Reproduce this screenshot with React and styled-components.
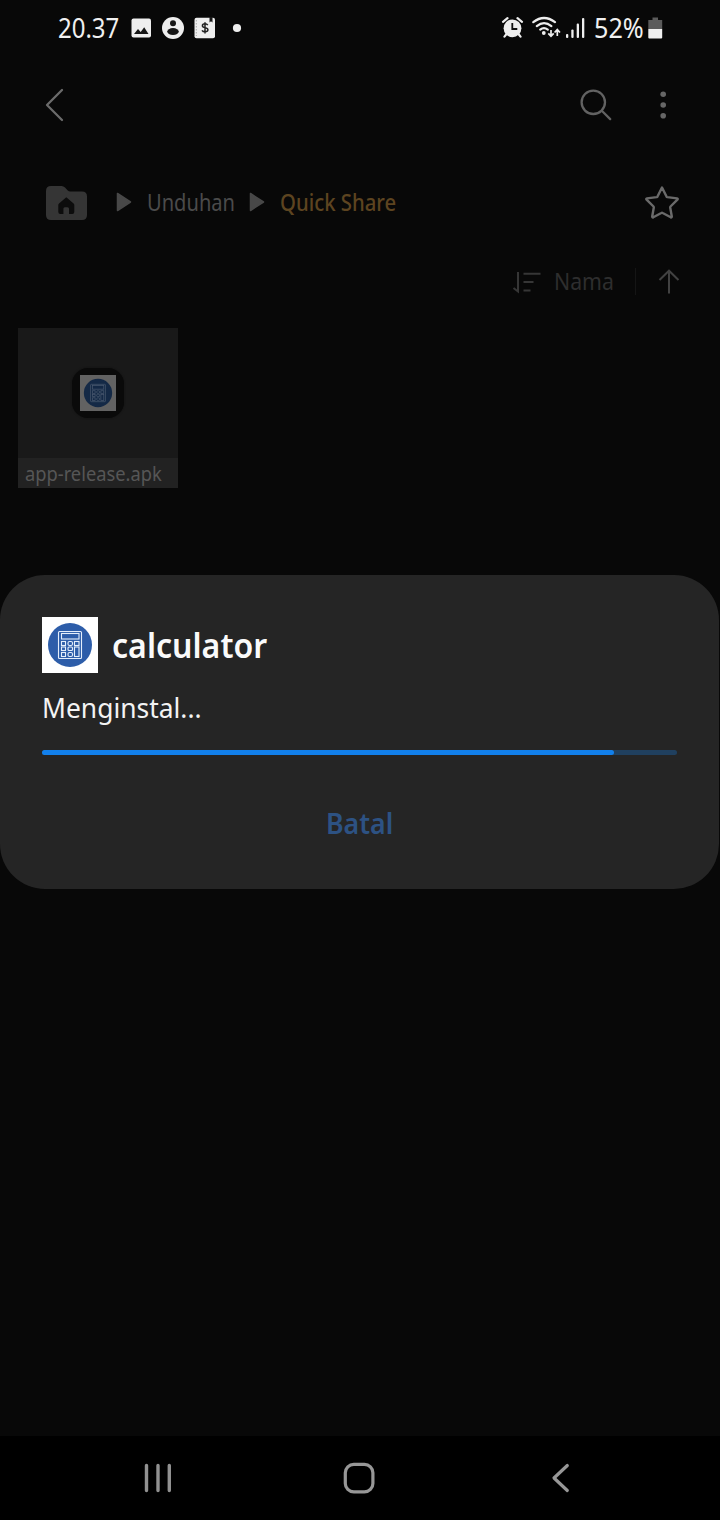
import React from "react";
import styled, { createGlobalStyle } from "styled-components";

const GlobalStyle = createGlobalStyle`
  * { box-sizing: border-box; }
  body { margin: 0; background: #080808; overflow: hidden; }
  svg { display: block; flex: none; }
`;

const Screen = styled.div`
  position: relative;
  display: flex;
  flex-direction: column;
  width: 720px;
  height: 1520px;
  background: #080808;
  font-family: "Noto Sans", sans-serif;
`;

/* Condensed label: the box keeps the final width, the glyphs are squeezed into it. */
const LabelBox = styled.div`
  flex: none;
  width: ${(p) => p.$width}px;
  height: ${(p) => p.$line}px;
  line-height: ${(p) => p.$line}px;
  font-size: ${(p) => p.$size}px;
  font-weight: ${(p) => p.$weight};
  color: ${(p) => p.$color};
  white-space: nowrap;
`;
const Squeeze = styled.span`
  display: inline-block;
  transform: scaleX(${(p) => p.$scale});
  transform-origin: 0 50%;
`;
function Label({ width, line = 30, size, weight = 400, color, scale = 1, children }) {
  return (
    <LabelBox $width={width} $line={line} $size={size} $weight={weight} $color={color}>
      <Squeeze $scale={scale}>{children}</Squeeze>
    </LabelBox>
  );
}

const StatusBar = styled.header`
  display: flex;
  justify-content: space-between;
  height: 56px;
  padding: 0 57px 0 58px;
`;
const StatusGroup = styled.div`
  display: flex;
  align-items: center;
`;
const BatteryLevel = styled.div`
  padding-left: 5px;
`;

const Toolbar = styled.div`
  display: flex;
  align-items: center;
  justify-content: space-between;
  height: 98px;
  padding: 0 52px 0 42px;
`;
const ToolbarActions = styled.div`
  display: flex;
  align-items: center;
  gap: 45px;
`;

const Breadcrumbs = styled.nav`
  display: flex;
  align-items: center;
  height: 96px;
  padding: 0 40px 0 45px;
`;
const Crumbs = styled.div`
  display: flex;
  align-items: center;
  flex: 1;
  padding-bottom: 1px;
`;
const CrumbArrow = styled.div`
  padding: 1px ${(p) => p.$after}px 0 ${(p) => p.$before}px;
`;

const SortBar = styled.div`
  display: flex;
  align-items: center;
  justify-content: flex-end;
  height: 63px;
  padding-right: 40px;
`;
const SortLabel = styled.div`
  padding: 0 20px 1px 12px;
`;
const Divider = styled.div`
  width: 1px;
  height: 27px;
  margin-right: 22px;
  background: #151515;
`;

const FileGrid = styled.main`
  flex: 1;
  padding: 15px 18px;
`;
const FileCard = styled.div`
  display: flex;
  flex-direction: column;
  width: 160px;
  height: 160px;
  background: #191919;
`;
const FilePreview = styled.div`
  display: flex;
  align-items: center;
  justify-content: center;
  flex: 1;
`;
const FileIcon = styled.div`
  display: flex;
  align-items: center;
  justify-content: center;
  width: 52px;
  height: 50px;
  border-radius: 16px;
  background: #0a0a0a;
  box-shadow: 0 0 2px #101010;
`;
const FileName = styled.div`
  height: 30px;
  padding-left: 7px;
  background: #222222;
`;

const Dialog = styled.section`
  position: absolute;
  top: 575px;
  left: 0;
  display: flex;
  flex-direction: column;
  width: 719px;
  height: 314px;
  padding: 42px 42px 0;
  border-radius: 45px;
  background: #252525;
`;
const DialogHeader = styled.div`
  display: flex;
  align-items: center;
  gap: 14px;
  height: 56px;
  margin-bottom: 17px;
`;
const Track = styled.div`
  height: 5px;
  margin-top: 26px;
  border-radius: 3px;
  background: #20405f;
`;
const Fill = styled.div`
  width: ${(p) => p.$value}%;
  height: 100%;
  border-radius: 3px;
  background: #1280ec;
`;
const DialogAction = styled.div`
  display: flex;
  justify-content: center;
  margin-top: 50px;
`;

const NavBar = styled.footer`
  display: flex;
  align-items: center;
  justify-content: space-between;
  height: 84px;
  padding: 0 148px 0 142px;
  background: #000;
`;

function CalculatorLogo({ size, dim }) {
  const paper = dim ? "#626262" : "#ffffff";
  const disc = dim ? "#142946" : "#2d5da9";
  const line = dim ? "#4b5a70" : "#e4eefb";
  return (
    <svg width={size} height={size} viewBox="0 0 56 56">
      <rect width="56" height="56" fill={paper} />
      <circle cx="28" cy="28" r="22" fill={disc} />
      <g fill="none" stroke={line} strokeWidth="1.1">
        <rect x="16.5" y="14.5" width="23" height="27" rx="1" />
        <rect x="19.5" y="16.5" width="17.5" height="5.5" />
        <rect x="19.5" y="24.5" width="4" height="4" />
        <rect x="26" y="24.5" width="4.5" height="4" rx="1.5" />
        <rect x="32.5" y="24.5" width="4.5" height="4" />
        <rect x="19.5" y="30" width="4" height="3.5" />
        <rect x="26" y="30" width="4.5" height="3.5" rx="1" />
        <rect x="19.5" y="35.5" width="4" height="4" />
        <rect x="26" y="35.5" width="4.5" height="4" rx="1.5" />
        <rect x="32.5" y="30" width="4.5" height="9.5" />
      </g>
    </svg>
  );
}

function NotificationIcons() {
  return (
    <svg width="120" height="24" viewBox="130 16 120 24">
      <g fill="#eeeeee">
        <rect x="131.5" y="18.5" width="19.5" height="19" rx="2" />
        <circle cx="173" cy="28" r="11" />
        <rect x="194.5" y="17.7" width="20.5" height="20.5" rx="2" />
        <circle cx="237" cy="28" r="4.1" />
      </g>
      <g fill="#161616">
        <path d="M134 34 L138 29 L140.7 32 L144.2 27.2 L148.5 34 Z" />
        <circle cx="173" cy="23.3" r="3" />
        <ellipse cx="173" cy="31.6" rx="5.8" ry="3.5" />
        <path d="M209.5 17h3v5.5l-1.5-1.2-1.5 1.2z" />
      </g>
      <path d="M196.3 20v16" stroke="#aaa" strokeWidth="1" strokeDasharray="1.5 1.5" />
      <path
        d="M207.8 25.1c-.7-1-1.7-1.3-2.8-1.3-1.5 0-2.6.7-2.6 1.9 0 2.8 5.5 1.3 5.5 4.1 0 1.3-1.2 2-2.8 2-1.4 0-2.5-.5-3.1-1.5M205 22.2v11.2"
        fill="none"
        stroke="#222"
        strokeWidth="1.5"
      />
    </svg>
  );
}

function SystemIcons() {
  return (
    <svg width="90" height="26" viewBox="499 15 90 26">
      <circle cx="512.5" cy="28.3" r="8.9" fill="#eee" />
      <g fill="none" stroke="#eee" strokeWidth="2.2" strokeLinecap="round">
        <path d="M503 21.8l4.5-3.6M522 21.8l-4.5-3.6M506.5 34l-2 2.6M518.5 34l2 2.6" />
      </g>
      <path d="M512.3 23v6h5" fill="none" stroke="#111" strokeWidth="1.8" />
      <g fill="none" stroke="#eee" strokeWidth="2.2" strokeLinecap="round">
        <path d="M533.3 22.2q10.7-8.4 21.7 0" />
        <path d="M536.8 26.1q7.2-5.8 14.6 0" />
        <path d="M540.2 29.6q3.7-2.9 7.6 0" />
      </g>
      <circle cx="543.8" cy="33" r="1.9" fill="#eee" />
      <g fill="none" stroke="#eee" strokeWidth="1.7">
        <path d="M551 30v6M548.3 33.3l2.7 2.9 2.7-2.9M557.3 36v-6M554.6 32.5l2.7-2.9 2.7 2.9" />
      </g>
      <g fill="#eee">
        <rect x="566" y="34" width="2.3" height="4" rx="1" />
        <rect x="571.3" y="29.5" width="2.3" height="8.5" rx="1" />
        <rect x="576.7" y="23.5" width="2.3" height="14.5" rx="1" />
        <rect x="582" y="18" width="2.3" height="20" rx="1" />
      </g>
    </svg>
  );
}

function BatteryIcon() {
  return (
    <svg width="15" height="23" viewBox="0 0 15 23">
      <path d="M4.5 0.5h5.500v2.500h4.200v9H0.300V3H4.500z" fill="#5b5b5b" />
      <path d="M0.300 12h13.900v8.500a1 1 0 0 1-1 1H1.300a1 1 0 0 1-1-1z" fill="#efefef" />
    </svg>
  );
}

function PlayTriangle() {
  return (
    <svg width="16" height="20" viewBox="0 0 16 20">
      <path d="M1.5 1.5v17L14.500 10z" fill="#484848" stroke="#484848" strokeWidth="1.5" strokeLinejoin="round" />
    </svg>
  );
}

export default function App() {
  return (
    <Screen>
      <GlobalStyle />
      <StatusBar>
        <StatusGroup>
          <Label width={72} size={26.5} color="#f0f0f0" scale={0.905}>20.37</Label>
          <NotificationIcons />
        </StatusGroup>
        <StatusGroup>
          <SystemIcons />
          <BatteryLevel>
            <Label width={54} size={26.5} color="#f0f0f0" scale={0.95}>52%</Label>
          </BatteryLevel>
          <BatteryIcon />
        </StatusGroup>
      </StatusBar>

      <Toolbar>
        <svg width="24" height="36" viewBox="42 87 24 36">
          <path d="M62 90L47 105l15 15" fill="none" stroke="#6b6b6b" strokeWidth="2.3" strokeLinecap="round" strokeLinejoin="round" />
        </svg>
        <ToolbarActions>
          <svg width="34" height="34" viewBox="579 88 34 34">
            <g fill="none" stroke="#626262" strokeWidth="2.3" strokeLinecap="round">
              <circle cx="593.3" cy="102.3" r="11.7" />
              <path d="M601.8 110.8l8.400 8.300" />
            </g>
          </svg>
          <svg width="10" height="34" viewBox="658 88 10 34">
            <g fill="#666">
              <circle cx="663.2" cy="94.2" r="2.8" />
              <circle cx="663.2" cy="105" r="2.8" />
              <circle cx="663.2" cy="115.8" r="2.8" />
            </g>
          </svg>
        </ToolbarActions>
      </Toolbar>

      <Breadcrumbs>
        <svg width="43" height="38" viewBox="45 183 43 38">
          <path d="M51 186h10.500q2 0 3.500 1.500l2.500 2.700q1.300 1.200 3 1.200H82q5 0 5 5V215q0 5-5 5H51q-5 0-5-5v-24q0-5 5-5z" fill="#353535" />
          <path d="M66.300 197.300l7.300 6.200q.7.700.7 1.600v7q0 2-2 2h-3.300v-5.300q0-1.500-1.500-1.500h-2.600q-1.500 0-1.500 1.500v5.300h-3.100q-2 0-2-2v-7q0-.9.7-1.600z" fill="#0c0c0c" />
        </svg>
        <Crumbs>
          <CrumbArrow $before={28} $after={15}><PlayTriangle /></CrumbArrow>
          <Label width={90} size={23.5} color="#4b4b4b" scale={0.855}>Unduhan</Label>
          <CrumbArrow $before={12} $after={15}><PlayTriangle /></CrumbArrow>
          <Label width={118} size={23.5} weight={500} color="#5d4420" scale={0.865}>Quick Share</Label>
        </Crumbs>
        <svg width="36" height="36" viewBox="644 184 36 36">
          <path
            d="M662 187.500l4.500 9q.2.500.8.600l9.700 1.300q1.300.3.400 1.300l-6.900 6.800q-.4.400-.3 1l1.600 9q0 1.300-1.100.8l-8-4.300q-.7-.4-1.400 0l-8 4.300q-1.100.5-1.100-.8l1.600-9q.1-.6-.3-1l-6.900-6.800q-.9-1 .4-1.300l9.700-1.300q.6-.1.800-.6z"
            fill="none"
            stroke="#6a6a6a"
            strokeWidth="2.400"
            strokeLinejoin="round"
          />
        </svg>
      </Breadcrumbs>

      <SortBar>
        <svg width="30" height="28" viewBox="512 268 30 28">
          <path d="M518 272v19.500l-4.500-3.500M523.500 273.700h17M523.500 282h10M523.500 290.500h7" fill="none" stroke="#363636" strokeWidth="2" />
        </svg>
        <SortLabel>
          <Label width={61} size={23.5} color="#2e2e2e" scale={0.905}>Nama</Label>
        </SortLabel>
        <Divider />
        <svg width="22" height="28" viewBox="658 268 22 28">
          <path d="M669 293.500v-22.500M659.500 280l9.500-9.300 9.500 9.300" fill="none" stroke="#424242" strokeWidth="2" />
        </svg>
      </SortBar>

      <FileGrid>
        <FileCard>
          <FilePreview>
            <FileIcon><CalculatorLogo size={36} dim /></FileIcon>
          </FilePreview>
          <FileName>
            <Label width={140} line={31} size={20} color="#565656" scale={0.915}>app-release.apk</Label>
          </FileName>
        </FileCard>
      </FileGrid>

      <NavBar>
        <svg width="32" height="32" viewBox="142 1462 32 32">
          <path d="M146.500 1465.500v25M158 1465.500v25M169.300 1465.500v25" stroke="#919191" strokeWidth="3.400" strokeLinecap="round" />
        </svg>
        <svg width="40" height="34" viewBox="342 1461 40 34">
          <rect x="345.300" y="1464.300" width="27.600" height="27.600" rx="8.500" fill="none" stroke="#979797" strokeWidth="3.200" />
        </svg>
        <svg width="22" height="32" viewBox="550 1462 22 32">
          <path d="M567.300 1465.500L554 1478l13.300 12.500" fill="none" stroke="#979797" strokeWidth="3.200" strokeLinecap="round" strokeLinejoin="round" />
        </svg>
      </NavBar>

      <Dialog>
        <DialogHeader>
          <CalculatorLogo size={56} />
          <Label width={160} line={48} size={34.5} weight={600} color="#fafafa" scale={0.93}>calculator</Label>
        </DialogHeader>
        <Label width={165} line={34} size={28} color="#f3f3f3" scale={0.943}>Menginstal...</Label>
        <Track>
          <Fill $value={90} />
        </Track>
        <DialogAction>
          <Label width={68} line={36} size={28} weight={600} color="#2d5283" scale={0.955}>Batal</Label>
        </DialogAction>
      </Dialog>
    </Screen>
  );
}
